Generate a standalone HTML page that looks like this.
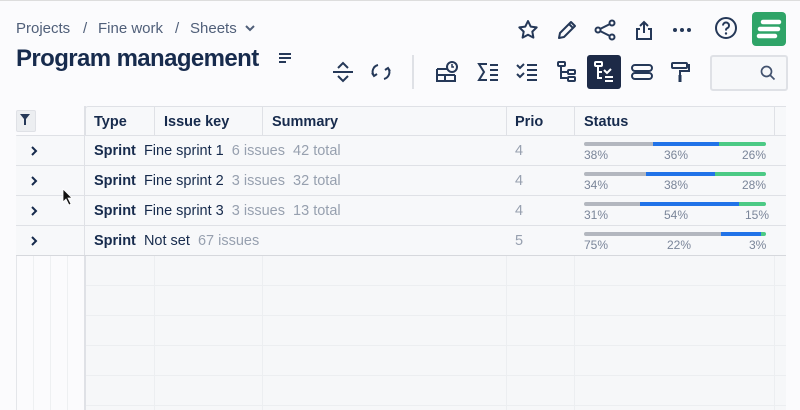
<!DOCTYPE html>
<html><head><meta charset="utf-8"><style>
body{margin:0;width:800px;height:410px;overflow:hidden;background:#fbfbfd;font-family:"Liberation Sans",sans-serif;position:relative;color:#172b4d}
.a{position:absolute}
.crumb{top:20px;font-size:15px;color:#505f79}
.ic{position:absolute;width:24px;height:24px}
.row{position:absolute;left:85px;width:701px;height:29px;border-bottom:1px solid #dfe1e6;background:#f7f8fa}
.lrow{position:absolute;left:16px;width:68px;height:29px;border-bottom:1px solid #dfe1e6;background:#f7f8fa}
.t{position:absolute;top:7px;font-size:14.5px;white-space:nowrap}
.b{font-weight:bold;color:#172b4d}
.g{color:#97a0af}
.bar{position:absolute;left:584px;top:6px;width:182px;height:4px;border-radius:2px;overflow:hidden;display:flex}
.pc{position:absolute;top:12px;font-size:12px;color:#7a8599}
.vl{position:absolute;width:1px;background:#e4e6ea}
.hl{position:absolute;height:1px;background:#eceef1}
</style></head><body>
<div class="a" style="left:0;top:0;width:800px;height:1px;background:#ddd"></div>
<div class="a crumb" style="left:16px">Projects</div>
<div class="a crumb" style="left:83px">/</div>
<div class="a crumb" style="left:98px">Fine work</div>
<div class="a crumb" style="left:175px">/</div>
<div class="a crumb" style="left:190px">Sheets</div>
<svg class="a" style="left:245px;top:24px" width="10" height="8"><path d="M1 2l4 4 4-4" stroke="#505f79" stroke-width="2" fill="none"/></svg>
<div class="a" style="left:16px;top:45px;font-size:24px;font-weight:bold;color:#172b4d;letter-spacing:-0.6px">Program management</div>
<svg class="a" style="left:278px;top:52px" width="14" height="12"><path d="M1 2h12M1 6h12M1 10h7" stroke="#253858" stroke-width="2"/></svg>
<!-- top icons -->
<svg class="ic" style="left:516px;top:18px" viewBox="0 0 24 24"><path d="M12 3l2.7 5.6 6 .8-4.4 4.2 1.1 6-5.4-2.9-5.4 2.9 1.1-6-4.4-4.2 6-.8z" fill="none" stroke="#253858" stroke-width="2" stroke-linejoin="round"/></svg>
<svg class="ic" style="left:555px;top:18px" viewBox="0 0 24 24"><path d="M4 20l1-5L16 4l4 4L9 19z M14 6l4 4" fill="none" stroke="#253858" stroke-width="2" stroke-linejoin="round"/></svg>
<svg class="ic" style="left:593px;top:18px" viewBox="0 0 24 24"><circle cx="5" cy="12" r="2.5" fill="none" stroke="#253858" stroke-width="2"/><circle cx="19" cy="5" r="2.5" fill="none" stroke="#253858" stroke-width="2"/><circle cx="19" cy="19" r="2.5" fill="none" stroke="#253858" stroke-width="2"/><path d="M7 11l10-5M7 13l10 5" stroke="#253858" stroke-width="2"/></svg>
<svg class="ic" style="left:632px;top:18px" viewBox="0 0 24 24"><path d="M12 15V4M8 8l4-4 4 4M8 11H5v10h14V11h-3" fill="none" stroke="#253858" stroke-width="2"/></svg>
<svg class="ic" style="left:670px;top:18px" viewBox="0 0 24 24"><circle cx="5" cy="12" r="2" fill="#253858"/><circle cx="12" cy="12" r="2" fill="#253858"/><circle cx="19" cy="12" r="2" fill="#253858"/></svg>
<svg class="ic" style="left:714px;top:16px" viewBox="0 0 24 24"><circle cx="12" cy="12" r="10" fill="none" stroke="#253858" stroke-width="2"/><path d="M9 9.5a3 3 0 1 1 4 2.8c-1 .4-1 1-1 2.2" fill="none" stroke="#253858" stroke-width="2"/><circle cx="12" cy="17.5" r="1.2" fill="#253858"/></svg>
<div class="a" style="left:752px;top:12px;width:34px;height:34px;border-radius:4px;background:#2fa468"></div>
<svg class="a" style="left:752px;top:12px" width="34" height="34"><path d="M11 10h16M8 17h18M7 24h16" stroke="#fff" stroke-width="4.5" stroke-linecap="round"/></svg>
<!-- toolbar -->
<svg class="ic" style="left:331px;top:60px" viewBox="0 0 24 24"><path d="M2 12h20M7 8l5-5 5 5M7 16l5 5 5-5" fill="none" stroke="#253858" stroke-width="2"/></svg>
<svg class="ic" style="left:369px;top:60px" viewBox="0 0 24 24"><path d="M9 5a7 7 0 0 0-4 11M3 13l2 3 3-2M15 19a7 7 0 0 0 4-11M21 11l-2-3-3 2" fill="none" stroke="#253858" stroke-width="2"/></svg>
<div class="a" style="left:412px;top:55px;width:2px;height:34px;background:#dfe1e6"></div>
<svg class="ic" style="left:435px;top:60px" viewBox="0 0 24 24"><path d="M2 9h10M2 9v12h18v-6M2 15h18M10 15v6" fill="none" stroke="#253858" stroke-width="2"/><circle cx="17" cy="7" r="5" fill="none" stroke="#253858" stroke-width="2"/><path d="M17 4v3h2" stroke="#253858" stroke-width="1.5" fill="none"/></svg>
<svg class="ic" style="left:476px;top:60px" viewBox="0 0 24 24"><path d="M11 4H3l5 8-5 8h8" fill="none" stroke="#253858" stroke-width="2"/><path d="M14 5h8M14 10h8M14 15h8M14 20h8" stroke="#253858" stroke-width="2"/></svg>
<svg class="ic" style="left:515px;top:60px" viewBox="0 0 24 24"><path d="M2 5l3 3 4-4M2 14l3 3 4-4" fill="none" stroke="#253858" stroke-width="2"/><path d="M12 5h10M12 10h10M12 15h10M12 20h10" stroke="#253858" stroke-width="2"/></svg>
<svg class="ic" style="left:555px;top:60px" viewBox="0 0 24 24"><rect x="3" y="2" width="7" height="4" rx="1" fill="none" stroke="#253858" stroke-width="2"/><path d="M6 6v12h6M6 12h6" stroke="#253858" stroke-width="2" fill="none"/><rect x="13" y="10" width="7" height="4" rx="1" fill="none" stroke="#253858" stroke-width="2"/><rect x="13" y="17" width="7" height="4" rx="1" fill="none" stroke="#253858" stroke-width="2"/></svg>
<div class="a" style="left:587px;top:55px;width:34px;height:34px;border-radius:3px;background:#1d2a47"></div>
<svg class="ic" style="left:592px;top:60px" viewBox="0 0 24 24"><rect x="3" y="2" width="7" height="4" rx="1" fill="none" stroke="#fff" stroke-width="2"/><path d="M6 6v12h4M6 12h4" stroke="#fff" stroke-width="2" fill="none"/><path d="M12 10l3 3 4-4M13 17h8M13 21h8" stroke="#fff" stroke-width="2" fill="none"/></svg>
<svg class="ic" style="left:630px;top:60px" viewBox="0 0 24 24"><rect x="2" y="5" width="20" height="6" rx="3" fill="none" stroke="#253858" stroke-width="2"/><rect x="2" y="13" width="20" height="6" rx="3" fill="none" stroke="#253858" stroke-width="2"/></svg>
<svg class="ic" style="left:669px;top:60px" viewBox="0 0 24 24"><rect x="3" y="3" width="15" height="5" rx="1" fill="none" stroke="#253858" stroke-width="2"/><path d="M18 5h2v6h-9v4" fill="none" stroke="#253858" stroke-width="2"/><rect x="9.5" y="15" width="3" height="7" fill="#253858"/></svg>
<div class="a" style="left:710px;top:55px;width:74px;height:32px;border:2px solid #dfe1e6;border-radius:3px;background:#f7f8fa"></div>
<svg class="a" style="left:760px;top:65px" width="16" height="16"><circle cx="6.5" cy="6.5" r="5" fill="none" stroke="#42526e" stroke-width="1.7"/><path d="M10 10l4.5 4.5" stroke="#42526e" stroke-width="1.7"/></svg>
<!-- grid -->
<div class="a" style="left:16px;top:110px;width:18px;height:20px;background:#eceef1;border-radius:2px;border:1px solid #dfe1e6"></div>
<svg class="a" style="left:20px;top:114px" width="11" height="12"><path d="M0 0h10L6 5v6H4V5z" fill="#253858"/></svg>
<div class="a" style="left:85px;top:106px;width:701px;height:29px;background:#f7f8fa;border:1px solid #dfe1e6;border-right:none;border-radius:3px 0 0 0"></div>
<div class="a b" style="left:94px;top:114px;font-size:14.5px">Type</div>
<div class="a b" style="left:164px;top:114px;font-size:14.5px">Issue key</div>
<div class="a b" style="left:272px;top:114px;font-size:14.5px">Summary</div>
<div class="a b" style="left:515px;top:114px;font-size:14.5px">Prio</div>
<div class="a b" style="left:584px;top:114px;font-size:14.5px">Status</div>
<div class="vl" style="left:154px;top:107px;height:28px;background:#dfe1e6"></div>
<div class="vl" style="left:262px;top:107px;height:28px;background:#dfe1e6"></div>
<div class="vl" style="left:506px;top:107px;height:28px;background:#dfe1e6"></div>
<div class="vl" style="left:574px;top:107px;height:28px;background:#dfe1e6"></div>
<div class="vl" style="left:774px;top:107px;height:28px;background:#dfe1e6"></div>
<div class="a" style="left:16px;top:135px;width:770px;height:1px;background:#dfe1e6"></div>
<div class="a" style="left:16px;top:135px;width:1px;height:275px;background:#e4e6ea"></div>
<div class="a" style="left:84px;top:106px;width:2px;height:304px;background:#dfe1e6"></div>

<div class="lrow" style="top:136px"></div><div class="lrow" style="top:166px"></div><div class="lrow" style="top:196px"></div><div class="lrow" style="top:226px"></div>
<svg class="a" style="left:30px;top:146px" width="8" height="10"><path d="M2 1l4 4-4 4" stroke="#172b4d" stroke-width="2" fill="none"/></svg>
<svg class="a" style="left:30px;top:176px" width="8" height="10"><path d="M2 1l4 4-4 4" stroke="#172b4d" stroke-width="2" fill="none"/></svg>
<svg class="a" style="left:30px;top:206px" width="8" height="10"><path d="M2 1l4 4-4 4" stroke="#172b4d" stroke-width="2" fill="none"/></svg>
<svg class="a" style="left:30px;top:236px" width="8" height="10"><path d="M2 1l4 4-4 4" stroke="#172b4d" stroke-width="2" fill="none"/></svg>
<svg class="a" style="left:62px;top:188px" width="12" height="18"><path d="M1 1v13l3-3 3 6 2-1-3-6h4z" fill="#111" stroke="#fff" stroke-width="0.8"/></svg>

<div class="row" style="top:136px">
<div class="t" style="left:9px"><span class="b">Sprint</span>&nbsp; Fine sprint 1 <span class="g">&nbsp;6 issues &nbsp;42 total</span></div>
<div class="t g" style="left:430px">4</div>
<div class="bar" style="left:499px"><div style="width:38%;background:#b3b7bf"></div><div style="width:36%;background:#2173e8"></div><div style="width:26%;background:#4cca85"></div></div>
<div class="pc" style="left:499px">38%</div><div class="pc" style="left:579px">36%</div><div class="pc" style="left:657px">26%</div></div>
<div class="row" style="top:166px">
<div class="t" style="left:9px"><span class="b">Sprint</span>&nbsp; Fine sprint 2 <span class="g">&nbsp;3 issues &nbsp;32 total</span></div>
<div class="t g" style="left:430px">4</div>
<div class="bar" style="left:499px"><div style="width:34%;background:#b3b7bf"></div><div style="width:38%;background:#2173e8"></div><div style="width:28%;background:#4cca85"></div></div>
<div class="pc" style="left:499px">34%</div><div class="pc" style="left:579px">38%</div><div class="pc" style="left:657px">28%</div></div>
<div class="row" style="top:196px">
<div class="t" style="left:9px"><span class="b">Sprint</span>&nbsp; Fine sprint 3 <span class="g">&nbsp;3 issues &nbsp;13 total</span></div>
<div class="t g" style="left:430px">4</div>
<div class="bar" style="left:499px"><div style="width:31%;background:#b3b7bf"></div><div style="width:54%;background:#2173e8"></div><div style="width:15%;background:#4cca85"></div></div>
<div class="pc" style="left:499px">31%</div><div class="pc" style="left:579px">54%</div><div class="pc" style="left:660px">15%</div></div>
<div class="row" style="top:226px">
<div class="t" style="left:9px"><span class="b">Sprint</span>&nbsp; Not set <span class="g">&nbsp;67 issues</span></div>
<div class="t g" style="left:430px">5</div>
<div class="bar" style="left:499px"><div style="width:75%;background:#b3b7bf"></div><div style="width:22%;background:#2173e8"></div><div style="width:3%;background:#4cca85"></div></div>
<div class="pc" style="left:499px">75%</div><div class="pc" style="left:582px">22%</div><div class="pc" style="left:664px">3%</div></div>
<div class="a" style="left:16px;top:255px;width:770px;height:1px;background:#d6d8dd"></div>
<div class="a" style="left:86px;top:256px;width:700px;height:154px;background:#f6f7f9"></div>
<div class="hl" style="left:86px;top:285px;width:700px"></div><div class="hl" style="left:86px;top:315px;width:700px"></div><div class="hl" style="left:86px;top:345px;width:700px"></div><div class="hl" style="left:86px;top:375px;width:700px"></div><div class="hl" style="left:86px;top:405px;width:700px"></div>
<div class="vl" style="left:154px;top:256px;height:154px;background:#eceef1"></div>
<div class="vl" style="left:262px;top:256px;height:154px;background:#eceef1"></div>
<div class="vl" style="left:506px;top:256px;height:154px;background:#eceef1"></div>
<div class="vl" style="left:574px;top:256px;height:154px;background:#eceef1"></div>
<div class="vl" style="left:774px;top:256px;height:154px;background:#eceef1"></div>
<div class="vl" style="left:33px;top:256px;height:154px;background:#eef0f2"></div>
<div class="vl" style="left:50px;top:256px;height:154px;background:#eef0f2"></div>
<div class="vl" style="left:67px;top:256px;height:154px;background:#eef0f2"></div>
<div class="a" style="left:786px;top:100px;width:14px;height:310px;background:#fbfbfd"></div>
</body></html>
